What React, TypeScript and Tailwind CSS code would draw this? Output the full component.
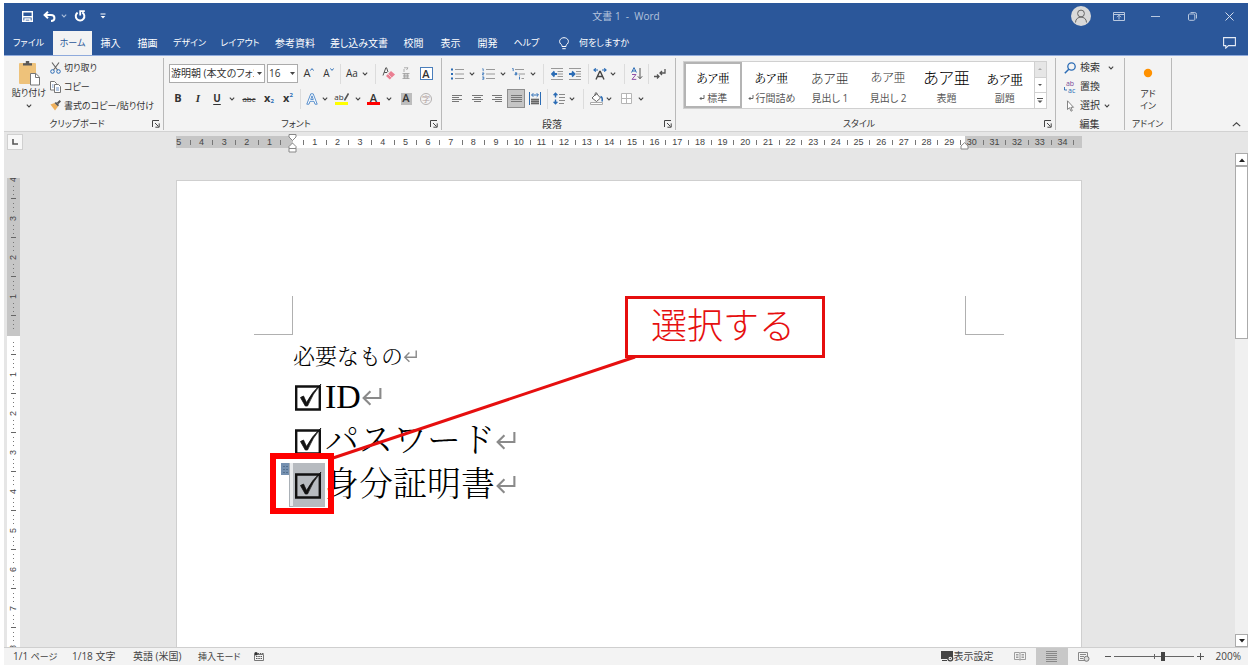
import React from "react";

const ink = "#444444";
const blue = "#2b6cb5";

function Svg({ w, h, children }: { w: number; h: number; children: React.ReactNode }) {
  return (
    <svg width={w} height={h} viewBox={`0 0 ${w} ${h}`} fill="none" className="shrink-0" aria-hidden="true">
      {children}
    </svg>
  );
}

function Chevron({ color = ink }: { color?: string }) {
  return (
    <Svg w={6} h={4}>
      <path d="M.8.7 3 2.9 5.2.7" stroke={color} strokeWidth="1.1" />
    </Svg>
  );
}

function Tool({ label, className, children }: { label: string; className: string; children: React.ReactNode }) {
  return (
    <button type="button" aria-label={label} className={`flex h-5 shrink-0 items-center justify-center ${className}`}>
      {children}
    </button>
  );
}

function Divider({ className }: { className: string }) {
  return (
    <div className={`flex h-5 shrink-0 justify-center ${className}`}>
      <div className="w-px bg-[#dcdcdc]" />
    </div>
  );
}

function Launcher({ label }: { label: string }) {
  return (
    <button type="button" aria-label={label} className="flex w-3 items-center justify-center">
      <Svg w={8} h={8}>
        <path d="M.5 7V.5H7M3 3l3.5 3.5M7.2 3.4v3.8H3.4" stroke={ink} />
      </Svg>
    </button>
  );
}

function Group({
  name,
  className,
  launcher,
  children,
}: {
  name: string;
  className: string;
  launcher?: boolean;
  children: React.ReactNode;
}) {
  return (
    <section aria-label={name} className={`flex shrink-0 flex-col pb-px ${className}`}>
      <div className="flex grow border-r border-[#b9b9b9]">{children}</div>
      <div className="flex h-3 items-center border-r border-[#b9b9b9] pr-px">
        <span className="grow text-center">{name}</span>
        {launcher && <Launcher label={`${name}の詳細`} />}
      </div>
    </section>
  );
}

const tabs = [
  { name: "ファイル", className: "w-[49px] text-[9px]" },
  { name: "ホーム", className: "w-[39px] bg-[#f3f3f3] text-[#2b579a] text-[9px]" },
  { name: "挿入", className: "w-[37px]" },
  { name: "描画", className: "w-[37px]" },
  { name: "デザイン", className: "w-[47px] text-[9px]" },
  { name: "レイアウト", className: "w-[54px] text-[9px]" },
  { name: "参考資料", className: "w-[56px]" },
  { name: "差し込み文書", className: "w-[72px]" },
  { name: "校閲", className: "w-[37px]" },
  { name: "表示", className: "w-[37px]" },
  { name: "開発", className: "w-[37px]" },
  { name: "ヘルプ", className: "w-[41px] text-[9px]" },
];

function TitleBar() {
  return (
    <header className="grid h-7 shrink-0 grid-cols-[1fr_auto_1fr] items-center bg-[#2b579a] pb-0.5 text-white">
      <div className="flex items-center pl-3">
        <Tool label="上書き保存" className="w-[22px]">
          <Svg w={11} h={11}>
            <path d="M.7.700h9.600v9.600H.7z" stroke="#fff" strokeWidth="1.400" />
            <path d="M1 5.800h9M3 10V8h5v2" stroke="#fff" strokeWidth="1.400" />
          </Svg>
        </Tool>
        <Tool label="元に戻す" className="w-[22px]">
          <Svg w={13} h={11}>
            <path d="M5 .8 1.600 4 5 7.200M2 4h6c4.600 0 4.600 6 0 6" stroke="#fff" strokeWidth="2" />
          </Svg>
        </Tool>
        <Tool label="元に戻す一覧" className="w-2">
          <Chevron color="#a9bcd9" />
        </Tool>
        <Tool label="やり直し" className="w-6">
          <Svg w={12} h={12}>
            <path d="M3.600 2.600A4.300 4.300 0 1 0 8.200 2.400" stroke="#fff" strokeWidth="2" />
            <path d="M6.200 5.500V1.200h4.600" stroke="#fff" strokeWidth="1.800" />
          </Svg>
        </Tool>
        <Tool label="クイックアクセスのカスタマイズ" className="w-[22px]">
          <Svg w={6} h={6}>
            <path d="M.5 1h5" stroke="#fff" />
            <path d="M.7 3h4.600L3 5.500z" fill="#fff" />
          </Svg>
        </Tool>
      </div>
      <h1 className="text-[10px] whitespace-pre text-[#b4c3dc]">{"文書 1  -  Word"}</h1>
      <div className="flex items-center justify-end">
        <Tool label="アカウント" className="w-[38px]">
          <Svg w={20} h={20}>
            <circle cx="10" cy="10" r="10" fill="#d9d9d9" />
            <circle cx="10" cy="7.500" r="3.400" stroke="#666" />
            <path d="M4.500 16.500c0-7.200 11-7.200 11 0" stroke="#666" />
          </Svg>
        </Tool>
        <Tool label="リボンの表示オプション" className="w-[37px]">
          <Svg w={12} h={9}>
            <path d="M.5.5h11v8H.5zM.5 2.500h11M6 7.500v-4M4 5.200l2-2 2 2" stroke="#b9c8df" />
          </Svg>
        </Tool>
        <Tool label="最小化" className="w-[37px]">
          <Svg w={9} h={1}>
            <path d="M0 .5h9" stroke="#b9c8df" />
          </Svg>
        </Tool>
        <Tool label="元のサイズに戻す" className="w-[37px]">
          <Svg w={9} h={9}>
            <rect x=".5" y="2" width="6.300" height="6.300" rx="1" stroke="#b9c8df" />
            <path d="M2.500.6h4.300q1.700 0 1.700 1.700v4.200" stroke="#b9c8df" />
          </Svg>
        </Tool>
        <Tool label="閉じる" className="w-[37px]">
          <Svg w={9} h={9}>
            <path d="m.5.5 8 8M8.500.5l-8 8" stroke="#d3dcec" />
          </Svg>
        </Tool>
      </div>
    </header>
  );
}

function TabBar() {
  return (
    <nav className="flex h-[25px] shrink-0 border-b border-[#8faadc] bg-[#2b579a] text-[10px] text-white">
      {tabs.map((t) => (
        <button key={t.name} type="button" className={`shrink-0 text-center whitespace-nowrap ${t.className}`}>
          {t.name}
        </button>
      ))}
      <button type="button" className="ml-3 flex items-center gap-2.5 whitespace-nowrap">
        <Svg w={10} h={13}>
          <path d="M3 9.500V8.300C-1.500 5 1 .7 5 .7s6.500 4.300 2 7.600v1.200zM3.300 11.700h3.400" stroke="#fff" />
        </Svg>
        <span className="text-[9px]">何をしますか</span>
      </button>
      <button type="button" aria-label="コメント" className="mr-3 ml-auto">
        <Svg w={13} h={12}>
          <path d="M.6.6h11.800v8H5.500l-2.700 2.500V8.600H.6z" stroke="#e6ecf5" strokeWidth="1.100" />
        </Svg>
      </button>
    </nav>
  );
}

function ClipboardGroup() {
  return (
    <Group name="クリップボード" className="w-40 text-[9px]" launcher>
      <button type="button" className="flex w-[46px] shrink-0 flex-col items-center justify-start pt-0.5 pl-1 text-[9px]">
        <Svg w={22} h={26}>
          <rect x="1" y="3" width="17" height="21" rx="1" fill="#eec27a" />
          <path d="M5 5.500V3.300h2.800V1h3.400v2.300H14v2.200z" fill="#595959" />
          <path d="M12.500 13.500h5.300l3.700 3.500v8h-9z" fill="#fff" stroke="#777" />
          <path d="M17.500 13.500v4h4" stroke="#777" />
        </Svg>
        <span className="leading-[14px] whitespace-nowrap">貼り付け</span>
        <span className="pt-1">
          <Chevron />
        </span>
      </button>
      <div className="flex flex-col text-[9px]">
        <button type="button" className="flex h-[19px] items-center gap-[3px] whitespace-nowrap">
          <Svg w={11} h={12}>
            <path d="m2 .5 5.500 7.500M9 .5 3.500 8" stroke="#666" strokeWidth="1.200" />
            <circle cx="2.500" cy="9.500" r="1.800" stroke={blue} />
            <circle cx="8.500" cy="9.500" r="1.800" stroke={blue} />
          </Svg>
          切り取り
        </button>
        <button type="button" className="flex h-[19px] items-center gap-[3px] whitespace-nowrap">
          <Svg w={11} h={12}>
            <path d="M.5.500h4l2 2V9h-6z" fill="#fff" stroke="#777" />
            <path d="M4.500 3.500h4l2 2v6h-6z" fill="#fff" stroke="#777" />
            <path d="M2 4h1.500M2 6h1.500M6 7h3M6 9h3" stroke="#6d93c8" />
          </Svg>
          コピー
        </button>
        <button type="button" className="flex h-[19px] items-center gap-[3px] whitespace-nowrap">
          <Svg w={11} h={11}>
            <path d="m.5 4.500 4-1.500L8 6.500 5 10.500z" fill="#efb15c" />
            <path d="m4.500 3 1.500-1 3 3L8 6.500z" fill="#555" />
            <path d="m7.500 3.500 2.800-2.800" stroke="#555" strokeWidth="2" />
          </Svg>
          書式のコピー/貼り付け
        </button>
      </div>
    </Group>
  );
}

function FontGroup() {
  return (
    <Group name="フォント" className="w-[278px] text-[9px]" launcher>
      <div className="flex flex-col pt-[3px]">
        <div className="flex h-[25px] items-center pl-[5px]">
          <div className="relative mr-0.5 w-24">
            <select
              aria-label="フォント名"
              className="block h-[19px] w-full appearance-none overflow-hidden border border-[#ababab] bg-white pr-2.5 pl-px text-[10px] text-clip text-[#333]"
            >
              <option>游明朝 (本文のフォント)</option>
            </select>
            <svg width="5" height="3" className="pointer-events-none absolute top-2 right-[3px]" aria-hidden="true">
              <path d="M0 0h5L2.500 3z" fill={ink} />
            </svg>
          </div>
          <div className="relative w-[31px]">
            <select
              aria-label="フォント サイズ"
              className="block h-[19px] w-full appearance-none border border-[#ababab] bg-white pl-px text-[10px] text-[#333]"
            >
              <option>16</option>
            </select>
            <svg width="5" height="3" className="pointer-events-none absolute top-2 right-[3px]" aria-hidden="true">
              <path d="M0 0h5L2.500 3z" fill={ink} />
            </svg>
          </div>
          <Tool label="フォント サイズの拡大" className="w-[22px]">
            <span className="text-[11px]">A</span>
            <span className="mb-2"><Svg w={4} h={3}><path d="m.3 2.600 1.700-2 1.700 2" stroke={blue} /></Svg></span>
          </Tool>
          <Tool label="フォント サイズの縮小" className="w-[17px]">
            <span className="text-[10px]">A</span>
            <span className="mb-2"><Svg w={4} h={3}><path d="m.3.400 1.700 2 1.700-2" stroke={blue} /></Svg></span>
          </Tool>
          <Divider className="w-1.5" />
          <Tool label="文字種の変換" className="w-[18px] text-[10px]">Aa</Tool>
          <Tool label="文字種の一覧" className="w-[7px]"><Chevron /></Tool>
          <Divider className="w-3.5" />
          <Tool label="書式のクリア" className="w-3">
            <Svg w={13} h={13}>
              <path d="M1 8.500 3.800.8h.8L6 5M2.200 5.500h3" stroke="#555" />
              <path d="m4 9 5-5 4 3.500-5.200 5z" fill="#ea7f92" />
              <path d="m6 7 3.700 3.700" stroke="#fff" strokeWidth=".6" />
            </Svg>
          </Tool>
          <Tool label="ルビ" className="w-6">
            <Svg w={10} h={13}>
              <path d="M3 .8h4L5.500 3M3 2v3M1.500 6.500h7M1.500 11.500h7M3.700 6.500v5M6.300 6.500v5M2 8.200h6M2 9.900h6" stroke="#999" strokeWidth=".8" />
            </Svg>
          </Tool>
          <Tool label="囲み線" className="w-4">
            <span className="flex h-[13px] w-[13px] items-center justify-center border border-[#4a7ebb] bg-white text-[11px] leading-3 font-semibold">A</span>
          </Tool>
        </div>
        <div className="flex h-[25px] items-center pl-1">
          <Tool label="太字" className="w-5 text-[11px] font-bold">B</Tool>
          <Tool label="斜体" className="w-5 font-['Liberation_Serif',serif] text-[11px] font-bold italic">I</Tool>
          <Tool label="下線" className="w-[18px] text-[10px] font-bold underline underline-offset-2">U</Tool>
          <Tool label="下線の一覧" className="w-3"><Chevron /></Tool>
          <Tool label="取り消し線" className="w-[22px] text-[8px] line-through">abc</Tool>
          <Tool label="下付き" className="w-[18px] text-[11px] font-bold">
            x<span className="mt-1.5 text-[6px] text-[#2b6cb5]">2</span>
          </Tool>
          <Tool label="上付き" className="w-5 text-[11px] font-bold">
            x<span className="mb-1.5 text-[6px] text-[#2b6cb5]">2</span>
          </Tool>
          <Divider className="w-1" />
          <Tool label="文字の効果" className="w-5">
            <Svg w={12} h={12}>
              <path d="M.8 11.200 4.800.8h2.400l4 10.400H9L8 8.300H4l-1 2.900zM4.700 6.500h2.600L6 2.800z" fill="#fff" stroke="#4a86c8" strokeWidth=".9" />
            </Svg>
          </Tool>
          <Tool label="文字の効果の一覧" className="w-1.5"><Chevron /></Tool>
          <Tool label="蛍光ペンの色" className="w-[27px]">
            <span className="flex flex-col items-center">
              <span className="flex h-[9px] items-center text-[8px]">
                ab
                <Svg w={5} h={8}><path d="M4.500.5 1 6.500.5 7.500" stroke="#555" strokeWidth="1.600" /></Svg>
              </span>
              <span className="h-[3px] w-[13px] bg-[#ffff00]" />
            </span>
          </Tool>
          <Tool label="蛍光ペンの一覧" className="w-1.5"><Chevron /></Tool>
          <Tool label="フォントの色" className="w-[25px]">
            <span className="flex flex-col items-center">
              <span className="h-[9px] text-[11px] leading-[9px] font-semibold">A</span>
              <span className="h-[3px] w-[13px] bg-[#ff0000]" />
            </span>
          </Tool>
          <Tool label="フォントの色の一覧" className="w-1.5"><Chevron /></Tool>
          <Tool label="文字の網かけ" className="w-7">
            <span className="flex h-3 w-[11px] items-center justify-center bg-[#bdbdbd] text-[11px] font-semibold">A</span>
          </Tool>
          <Tool label="囲い文字" className="w-3">
            <span className="flex h-3 w-3 shrink-0 items-center justify-center rounded-full border border-[#b4b0b0] text-[8px] text-[#b0a0a0]">字</span>
          </Tool>
        </div>
      </div>
    </Group>
  );
}

function Lines({ rows }: { rows: [number, number][] }) {
  return (
    <Svg w={11} h={9}>
      {rows.map(([x, w], i) => (
        <path key={i} d={`M${x} ${i * 2 + 1.5}h${w}`} stroke="#777" />
      ))}
    </Svg>
  );
}

function ParagraphGroup() {
  return (
    <Group name="段落" className="w-[234px] text-[10px]" launcher>
      <div className="flex flex-col pt-[3px]">
        <div className="flex h-[25px] items-center pl-[5px]">
          <Tool label="箇条書き" className="w-5">
            <Svg w={13} h={12}>
              <path d="M0 1.500h2M0 6h2M0 10.500h2" stroke={blue} strokeWidth="2" />
              <path d="M4 1.500h9M4 6h9M4 10.500h9" stroke="#999" />
            </Svg>
          </Tool>
          <Tool label="箇条書きの一覧" className="w-2.5"><Chevron /></Tool>
          <Tool label="段落番号" className="w-[22px]">
            <Svg w={13} h={12}>
              <path d="M.3.800h.9v2.400M.2 4.900h1.600v1H.4v1h1.500M.2 8.900h1.600v2.400H.2M.6 10h1" stroke={blue} strokeWidth=".8" />
              <path d="M4 1.500h9M4 6h9M4 10.500h9" stroke="#999" />
            </Svg>
          </Tool>
          <Tool label="段落番号の一覧" className="w-2"><Chevron /></Tool>
          <Tool label="アウトライン" className="w-[22px]">
            <Svg w={13} h={12}>
              <path d="M.3.500h.9v2.600M3 4.800h1.800v2H3v-1h1.800M7.500 8.700v2.800M7.500 7.500v.6" stroke={blue} strokeWidth=".9" />
              <path d="M3 1.500h9M6.500 6H13M9.500 10.500H12" stroke="#999" />
            </Svg>
          </Tool>
          <Tool label="アウトラインの一覧" className="w-2"><Chevron /></Tool>
          <Divider className="w-3" />
          <Tool label="インデントを減らす" className="w-4">
            <Svg w={12} h={12}>
              <path d="M0 .5h12M6.500 3.500H12M6.500 6H12M6.500 8.500H12M0 11.500h12" stroke="#999" />
              <path d="M6 6H1.500M3.500 3.500 1 6l2.500 2.500" stroke={blue} strokeWidth="1.800" />
            </Svg>
          </Tool>
          <Tool label="インデントを増やす" className="w-5">
            <Svg w={12} h={12}>
              <path d="M0 .5h12M7 3.500h5M7 6h5M7 8.500h5M0 11.500h12" stroke="#999" />
              <path d="M0 6h5M3 3.500 5.500 6 3 8.500" stroke={blue} strokeWidth="1.800" />
            </Svg>
          </Tool>
          <Divider className="w-1.5" />
          <Tool label="拡張書式" className="w-[18px]">
            <Svg w={14} h={12}>
              <path d="m3 11.500 3.700-8h.6l3.700 8M4.500 8.500h5" stroke={ink} strokeWidth="1.400" />
              <path d="M1 2h4M9 2h4M2.800.4 1 2l1.800 1.600M11.200.4 13 2l-1.800 1.600" stroke={blue} strokeWidth="1.200" />
            </Svg>
          </Tool>
          <Tool label="拡張書式の一覧" className="w-2"><Chevron /></Tool>
          <Divider className="w-3.5" />
          <Tool label="並べ替え" className="w-3">
            <Svg w={12} h={13}>
              <path d="M.6 5.500 3 .6l2.400 4.900M1.400 4h3.200" stroke={blue} />
              <path d="M1 7.500h4L1 12.400h4.300" stroke="#9253a8" />
              <path d="M9 1v10.500M6.800 9.300 9 11.700l2.200-2.400" stroke="#555" />
            </Svg>
          </Tool>
          <Divider className="w-2.5" />
          <Tool label="編集記号の表示" className="w-3.5">
            <Svg w={12} h={10}>
              <path d="M11 0v4H6M8 2 6 4l2 2M0 7.500h4.500M3 5.500l2 2-2 2" stroke="#555" strokeWidth="1.300" />
            </Svg>
          </Tool>
        </div>
        <div className="flex h-[25px] items-center pl-[5px]">
          <Tool label="左揃え" className="w-5"><Lines rows={[[0, 10], [0, 7], [0, 10], [0, 7]]} /></Tool>
          <Tool label="中央揃え" className="w-5"><Lines rows={[[0, 11], [2, 7], [0, 11], [2, 7]]} /></Tool>
          <Tool label="右揃え" className="w-[18px]"><Lines rows={[[1, 10], [4, 7], [1, 10], [4, 7]]} /></Tool>
          <Tool label="両端揃え" className="w-[22px]">
            <span className="flex h-[19px] w-[18px] items-center justify-center border border-[#8e8e8e] bg-[#c5c5c5]">
              <Lines rows={[[0, 11], [0, 11], [0, 11], [0, 11]]} />
            </span>
          </Tool>
          <Tool label="均等割り付け" className="w-4">
            <Svg w={12} h={13}>
              <path d="M.5 0v13M11.500 0v13M3 3h6M4.300 1.200 2.500 3l1.800 1.800M7.700 1.200 9.500 3 7.700 4.800" stroke={blue} />
              <path d="M2 6.500h8v6H2z" fill="#999" />
              <path d="M2 7.500h8M2 9.500h8M2 11.500h8" stroke="#666" />
            </Svg>
          </Tool>
          <Divider className="w-2" />
          <Tool label="行と段落の間隔" className="w-4">
            <Svg w={12} h={13}>
              <path d="M2.500 1.500v4M2.500 7.500v4M.6 3.200l1.900-2 1.900 2M.6 9.800l1.900 2 1.900-2" stroke={blue} strokeWidth="1.400" />
              <path d="M6 2.500h6M6 5.500h6M6 8.500h6M6 11.500h5" stroke="#888" />
            </Svg>
          </Tool>
          <Tool label="行間の一覧" className="w-2.5"><Chevron /></Tool>
          <Divider className="w-3" />
          <Tool label="塗りつぶし" className="w-[15px]">
            <Svg w={14} h={13}>
              <path d="m2 6 4.500-4.500L10.500 6 6.500 9.500zM5 4V1.500q1.500-2 2 0V3" fill="#fff" stroke="#666" />
              <path d="M10.500 4.500q2.500 1 1.500 5" stroke={blue} strokeWidth="1.500" />
              <path d="M.5 10.500h12v2H.5z" fill="#fff" stroke="#aaa" />
            </Svg>
          </Tool>
          <Tool label="塗りつぶしの一覧" className="w-2.5"><Chevron /></Tool>
          <Tool label="罫線" className="w-6">
            <Svg w={11} h={11}>
              <path d="M.5.5h10v10H.5zM5.500.5v10M.5 5.500h10" fill="#fff" stroke="#b5b5b5" />
            </Svg>
          </Tool>
          <Tool label="罫線の一覧" className="w-1.5"><Chevron /></Tool>
        </div>
      </div>
    </Group>
  );
}

const styles = [
  { name: "標準", mark: true, className: "border-[#b4b4b4]", sample: "text-xs font-['Noto_Serif_CJK_JP',serif] text-black" },
  { name: "行間詰め", mark: true, className: "border-transparent", sample: "text-xs font-['Noto_Serif_CJK_JP',serif] text-black" },
  { name: "見出し 1", mark: false, className: "border-transparent", sample: "text-[13px] font-light text-[#333]" },
  { name: "見出し 2", mark: false, className: "border-transparent", sample: "text-xs font-light text-[#333]" },
  { name: "表題", mark: false, className: "border-transparent", sample: "text-base font-light text-black" },
  { name: "副題", mark: false, className: "border-transparent", sample: "text-[13px] font-['Noto_Serif_CJK_JP',serif] text-black" },
];

function StylesGroup() {
  return (
    <Group name="スタイル" className="w-[380px] text-[9px]" launcher>
      <div className="flex grow items-start pt-[3px] pr-2 pl-[7px]">
        <div className="flex h-12 grow border border-[#d0d0d0] bg-white">
          {styles.map((s) => (
            <button
              key={s.name}
              type="button"
              className={`flex min-w-0 flex-1 flex-col items-center border-2 ${s.className}`}
            >
              <span className={`flex h-7 items-center leading-none whitespace-nowrap ${s.sample}`}>あア亜</span>
              <span className="flex items-center gap-0.5 text-[10px] leading-3 whitespace-nowrap text-[#555]">
                {s.mark && (
                  <Svg w={6} h={6}>
                    <path d="M5 0v3.500H1M2.500 2 1 3.500 2.500 5" stroke="#555" strokeWidth=".9" />
                  </Svg>
                )}
                {s.name}
              </span>
            </button>
          ))}
          <div className="flex w-3 flex-col border-l border-[#d0d0d0]">
            <button type="button" aria-label="前のスタイル" className="flex flex-1 items-center justify-center bg-[#e6e6e6]">
              <Svg w={4} h={2}><path d="M0 2h4L2 0z" fill="#aaa" /></Svg>
            </button>
            <button type="button" aria-label="次のスタイル" className="flex flex-1 items-center justify-center border-y border-[#d0d0d0]">
              <Svg w={4} h={2}><path d="M0 0h4L2 2z" fill="#555" /></Svg>
            </button>
            <button type="button" aria-label="スタイルの一覧" className="flex flex-1 items-center justify-center">
              <Svg w={6} h={6}>
                <path d="M0 .5h6" stroke="#555" />
                <path d="M.5 2.500h5L3 5z" fill="#555" />
              </Svg>
            </button>
          </div>
        </div>
      </div>
    </Group>
  );
}

function Ribbon() {
  return (
    <div className="flex h-[76px] shrink-0 border-b border-[#d2d2d2] bg-[#f3f3f3] pt-0.5 text-[#333]">
      <ClipboardGroup />
      <FontGroup />
      <ParagraphGroup />
      <StylesGroup />
      <Group name="編集" className="w-[69px] text-[10px]">
        <div className="flex flex-col pl-2 text-[10px]">
          <button type="button" className="flex h-[19px] items-center gap-1 whitespace-nowrap">
            <Svg w={12} h={12}>
              <circle cx="7.500" cy="4.500" r="3.700" stroke={blue} strokeWidth="1.300" />
              <path d="M4.800 7.200.8 11.200" stroke={blue} strokeWidth="1.500" />
            </Svg>
            検索
            <span className="pl-1"><Chevron /></span>
          </button>
          <button type="button" className="flex h-[19px] items-center gap-1 whitespace-nowrap">
            <span className="flex w-3 flex-col text-[7px] leading-[7px]">
              <span className="text-[#7a4a9a]">ab</span>
              <span className="flex text-[#2b6cb5]">
                <Svg w={4} h={5}><path d="M.5 0v3H3" stroke={blue} strokeWidth=".9" /></Svg>ac
              </span>
            </span>
            置換
          </button>
          <button type="button" className="flex h-[19px] items-center gap-1 whitespace-nowrap">
            <Svg w={12} h={12}>
              <path d="M3.500.8v8.700l2-1.800 1.500 3.500 1.300-.6-1.400-3.300h2.600z" fill="#fff" stroke="#777" strokeWidth=".9" />
            </Svg>
            選択
            <Chevron />
          </button>
        </div>
      </Group>
      <Group name="アドイン" className="w-[47px] text-[9px]">
        <button type="button" className="flex grow flex-col items-center justify-start pt-2.5 text-[9px] leading-3">
          <Svg w={10} h={10}>
            <circle cx="5" cy="5" r="4.200" fill="#ff9100" />
          </Svg>
          <span className="pt-2.5">アド</span>
          <span>イン</span>
        </button>
      </Group>
      <button type="button" aria-label="リボンを折りたたむ" className="mt-auto mr-[7px] mb-1 ml-auto">
        <Svg w={9} h={5}>
          <path d="m.8 4.200 3.700-3.400 3.700 3.400" stroke={ink} strokeWidth="1.100" />
        </Svg>
      </button>
    </div>
  );
}

function HorizontalRuler() {
  const cells = Array.from({ length: 40 }, (_, i) => Math.abs(i - 5));
  return (
    <div className="relative mx-auto w-[906px] text-[9px]">
      <div className="mt-1 h-3 overflow-hidden bg-[linear-gradient(to_right,#c6c6c6_117px,#fff_117px,#fff_789px,#c6c6c6_789px)] font-['Liberation_Sans',sans-serif] text-[#444]">
        <div className="-ml-2 flex h-full w-full items-center leading-none">
          {cells.map((n, i) => (
            <div key={i} className="flex min-w-0 flex-1 items-center">
              <span className="min-w-0 flex-1 text-center">{n || ""}</span>
              <span className="h-[5px] w-px bg-[#777]" />
            </div>
          ))}
        </div>
      </div>
      <svg width="9" height="20" className="absolute top-0.5 left-[112px]" fill="#fff" stroke="#888" aria-hidden="true">
        <path d="M1 .5h7v2.500L4.500 6.500 1 3zM4.500 9 8 12.500v2H1v-2zM1 14.500h7v3.500H1z" />
      </svg>
      <svg width="9" height="8" className="absolute top-2.5 left-[784px]" fill="#fff" stroke="#888" aria-hidden="true">
        <path d="M4.500.7 8 4v3H1V4z" />
      </svg>
    </div>
  );
}

function VerticalRuler() {
  const cells = [4, 3, 2, 1, 0, 1, 2, 3, 4, 5, 6, 7, 8];
  return (
    <div className="mt-[26px] ml-[3px] min-h-0 w-[13px] grow overflow-hidden bg-[linear-gradient(to_bottom,#c6c6c6_158px,#fff_158px)] font-['Liberation_Sans',sans-serif] text-[9px] text-[#444]">
      <div className="-mt-[18px] flex flex-col">
        {cells.map((n, i) => (
          <div key={i} className="flex h-[39px] shrink-0 flex-col items-center justify-between pt-1">
            <i className="size-px bg-[#777]" />
            <i className="size-px bg-[#777]" />
            <i className="size-px bg-[#777]" />
            <span className="flex h-[7px] -rotate-90 items-center leading-none">{n || ""}</span>
            <i className="size-px bg-[#777]" />
            <i className="size-px bg-[#777]" />
            <i className="size-px bg-[#777]" />
            <i className="h-px w-[5px] bg-[#666]" />
          </div>
        ))}
      </div>
    </div>
  );
}

function ReturnMark({ small }: { small?: boolean }) {
  return (
    <svg width={small ? 15 : 22} height={small ? 15 : 22} viewBox="0 0 21 21" fill="none" className="shrink-0" aria-hidden="true">
      <path d="M18.500 2v9.500H2.500M9 5l-6.500 6.500L9 18" stroke="#8a8a8a" strokeWidth="2" />
    </svg>
  );
}

function Task({ id, text, selected }: { id: string; text: string; selected?: boolean }) {
  return (
    <li className="flex h-11 items-center">
      <span className={`relative flex h-full w-8 shrink-0 items-center ${selected ? "bg-[#b7bbc0]" : ""}`}>
        {selected && (
          <span className="absolute inset-y-0 -left-3 flex w-3">
            <span className="flex h-3 w-2 items-center justify-center bg-[#7590b0]">
              <Svg w={5} h={7}>
                <path d="M1 0v7M4 0v7" stroke="#34506f" strokeDasharray="1 2" />
              </Svg>
            </span>
            <span className="grow border-b border-l border-[#aab0b6] bg-[#e9ebed]" />
          </span>
        )}
        <input id={id} type="checkbox" defaultChecked className="peer absolute inset-0 opacity-0" />
        <svg width="29" height="29" className="pointer-events-none ml-0.5" fill="none" aria-hidden="true">
          <path d="M1.200 3.500h23.600v23H1.200z" stroke="#111" strokeWidth="2.400" />
          <path d="m5.500 14.500 3-1.500 3 6.500Q17 9 26 1q-8.500 9.500-13.500 22h-2.200z" fill="#111" stroke="#111" strokeWidth=".8" />
        </svg>
      </span>
      <label htmlFor={id} className="text-[34px] leading-none whitespace-nowrap">{text}</label>
      <ReturnMark />
    </li>
  );
}

function Page() {
  return (
    <article className="relative mx-auto mt-7 w-[906px] grow border border-b-0 border-[#cfcfcf] bg-white pt-[115px] font-['Liberation_Serif','Noto_Serif_CJK_JP','Noto_Sans_CJK_JP',serif] font-light text-black [font-feature-settings:normal]">
      <div className="flex h-[39px] justify-between px-[77px]">
        <div className="w-[39px] border-r border-b border-[#b0b0b0]" />
        <div className="w-[39px] border-b border-l border-[#b0b0b0]" />
      </div>
      <div className="pt-0.5 pl-[116px]">
        <p className="flex h-[38px] items-center text-[22px] whitespace-nowrap">
          必要なもの
          <ReturnMark small />
        </p>
        <ul>
          <Task id="task-id" text="ID" />
          <Task id="task-password" text="パスワード" />
          <Task id="task-identity" text="身分証明書" selected />
        </ul>
      </div>
      <svg width="310" height="110" className="pointer-events-none absolute top-[172px] left-[150px]" aria-hidden="true">
        <path d="M6 105 308 4" stroke="#e60f0f" strokeWidth="3" />
      </svg>
      <div className="pointer-events-none absolute top-[272px] left-[93px] h-[61px] w-16 border-6 border-[#ff0000]" />
      <div className="absolute top-[115px] left-[448px] flex h-[62px] w-[200px] items-center justify-center border-3 border-[#e60f0f] bg-white pr-1 pb-2 font-['Noto_Sans_CJK_JP',sans-serif] text-4xl leading-none whitespace-nowrap text-[#e60f0f]">
        選択する
      </div>
    </article>
  );
}

function ScrollBar() {
  return (
    <div className="mt-px flex w-[13px] shrink-0 flex-col bg-[#f0f0f0]">
      <button type="button" aria-label="上へスクロール" className="flex h-[13px] items-center justify-center border border-[#ababab] bg-white">
        <Svg w={6} h={4}><path d="M0 4h6L3 .5z" fill="#222" /></Svg>
      </button>
      <div className="h-[173px] border border-[#ababab] bg-white" />
      <button type="button" aria-label="下へスクロール" className="mt-auto flex h-[13px] items-center justify-center border border-[#ababab] bg-white">
        <Svg w={6} h={4}><path d="M0 0h6L3 3.500z" fill="#222" /></Svg>
      </button>
    </div>
  );
}

function StatusBar() {
  return (
    <footer className="flex h-[17px] shrink-0 items-center bg-[#f3f3f3] pr-[7px] pl-[9px] text-[10px] whitespace-nowrap text-[#444]">
      <span className="w-[59px]">1/1 <span className="text-[9px]">ページ</span></span>
      <span className="w-[61px]">1/18 文字</span>
      <span className="w-[65px]">英語 (米国)</span>
      <span className="w-14 text-[9px]">挿入モード</span>
      <button type="button" aria-label="マクロの記録">
        <Svg w={10} h={9}>
          <path d="M.5 2.500h9v6h-9z" stroke="#777" />
          <path d="M3.500 1.500h6M2 4.500h6M2 6.500h6" stroke="#555" strokeDasharray="1.500 .8" />
          <circle cx="2" cy="1.800" r="1.700" fill="#333" />
        </Svg>
      </button>
      <button type="button" className="ml-auto flex items-center">
        <Svg w={13} h={11}>
          <path d="M0 0h12v6H7v2H0zM1 9h5v1H1z" fill="#444" />
          <circle cx="9.300" cy="7.500" r="2.400" fill="#f3f3f3" stroke="#444" strokeWidth="1.300" />
          <circle cx="9.300" cy="7.500" r=".7" fill="#444" />
        </Svg>
        表示設定
      </button>
      <button type="button" aria-label="閲覧モード" className="ml-2.5 flex h-full w-8 items-center justify-center">
        <Svg w={12} h={9}>
          <path d="M.5.5h4.800l.7.700.7-.7h4.800v7H6.700L6 8.300l-.7-.8H.5zM6 1v7M2 2.500h2.500M2 4h2.500M2 5.500h2.500M7.500 2.500H10M7.500 4H10M7.500 5.500H10" stroke="#888" strokeWidth=".8" />
        </Svg>
      </button>
      <button type="button" aria-label="印刷レイアウト" className="flex h-full w-8 items-center justify-center bg-[#c8c8c8]">
        <Svg w={11} h={11}>
          <path d="M0 .5h11M0 2.500h11M0 4.500h11M0 6.500h11M0 8.500h11M0 10.500h11" stroke="#888" />
        </Svg>
      </button>
      <button type="button" aria-label="Web レイアウト" className="flex h-full w-8 items-center justify-center">
        <Svg w={12} h={10}>
          <path d="M.5.5h9v8h-9zM2 2.500h6M2 4.500h4M2 6.500h3" stroke="#888" />
          <circle cx="8.500" cy="6.800" r="2.500" fill="#ddd" stroke="#777" />
        </Svg>
      </button>
      <button type="button" aria-label="縮小" className="ml-0.5 flex w-3 items-center justify-center">
        <Svg w={6} h={1}><path d="M0 .5h6" stroke="#555" /></Svg>
      </button>
      <input
        type="range"
        min={0}
        max={100}
        defaultValue={63}
        aria-label="ズーム"
        className="h-[9px] w-20 appearance-none bg-[linear-gradient(#666,#666),linear-gradient(#666,#666)] bg-[length:100%_1px,1px_5px] bg-[position:center,40px_center] bg-no-repeat [&::-webkit-slider-thumb]:h-[9px] [&::-webkit-slider-thumb]:w-1 [&::-webkit-slider-thumb]:appearance-none [&::-webkit-slider-thumb]:bg-[#444]"
      />
      <button type="button" aria-label="拡大" className="flex w-3.5 items-center justify-center">
        <Svg w={7} h={7}><path d="M0 3.500h7M3.500 0v7" stroke="#555" /></Svg>
      </button>
      <button type="button" className="ml-2">200%</button>
    </footer>
  );
}

export default function App() {
  return (
    <div className="h-screen overflow-hidden bg-white pt-[3px] pr-[7px] pb-1.5 pl-1 font-['Open_Sans','Noto_Sans_CJK_JP',sans-serif] [font-feature-settings:'palt']">
      <div className="flex h-full flex-col">
        <TitleBar />
        <TabBar />
        <Ribbon />
        <main className="flex min-h-0 grow flex-col border-b border-[#cfcfcf] bg-[#e6e6e6]">
          <div className="flex h-5 shrink-0 pr-[13px]">
            <div className="w-[19px] shrink-0 pt-0.5 pl-[3px]">
              <button type="button" aria-label="左揃えタブ" className="flex size-4 items-center justify-center border border-[#d0d0d0] bg-[#f8f8f8]">
                <Svg w={6} h={6}><path d="M1 0v5h5" stroke="#555" strokeWidth="1.600" /></Svg>
              </button>
            </div>
            <HorizontalRuler />
          </div>
          <div className="flex min-h-0 grow">
            <div className="flex w-[19px] shrink-0 flex-col">
              <VerticalRuler />
            </div>
            <div className="flex min-w-0 grow flex-col">
              <Page />
            </div>
            <ScrollBar />
          </div>
        </main>
        <StatusBar />
      </div>
    </div>
  );
}
